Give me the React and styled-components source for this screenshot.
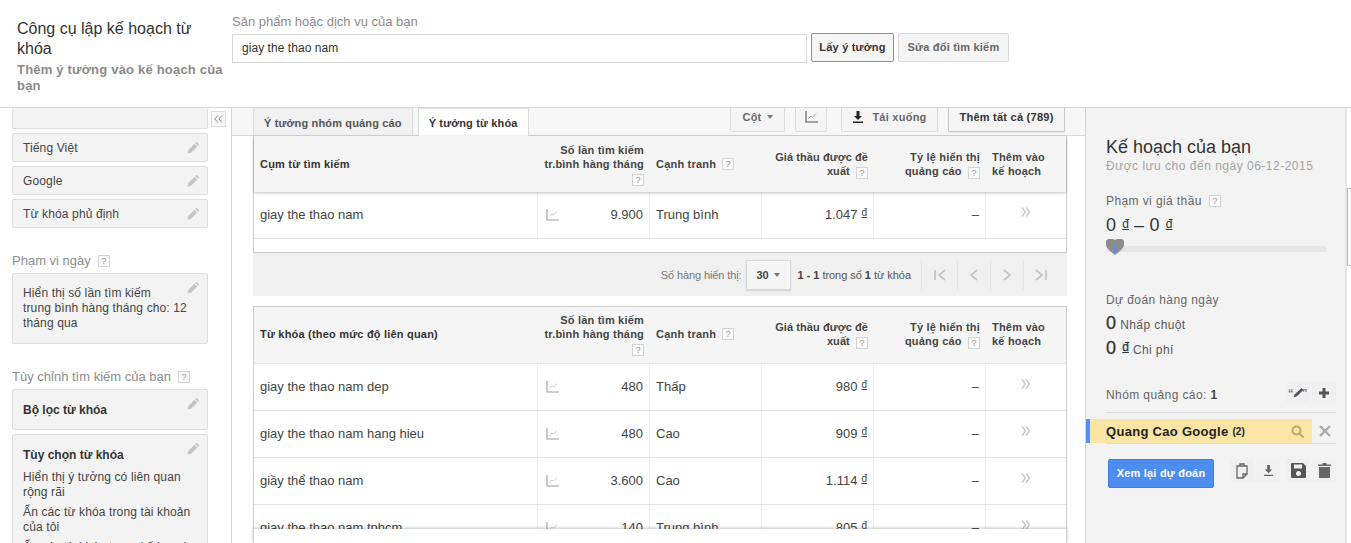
import React from "react";
import styled, { createGlobalStyle } from "styled-components";

const Global = createGlobalStyle`
  html, body { margin: 0; padding: 0; height: 100%; overflow: hidden; background: #fff; }
  body { font-family: "Liberation Sans", Arial, sans-serif; font-size: 13px; color: #333; }
  #root { height: 100%; }
  * { box-sizing: border-box; }
`;

const Page = styled.div`display: flex; flex-direction: column; height: 543px; width: 1351px; overflow: hidden;`;
const Header = styled.header`display: flex; height: 108px; flex: none; border-bottom: 1px solid #d6d6d6;`;
const Heading = styled.div`width: 232px; flex: none; padding: 19px 0 0 17px;`;
const Title = styled.h1`margin: 0 8px 0 0; font-weight: 400; font-size: 16px; line-height: 20px; color: #333;`;
const Subtitle = styled.h2`margin: 3px 0 0; font-weight: 700; font-size: 13px; line-height: 16px; color: #8a8a8a; letter-spacing: .2px;`;
const SearchBox = styled.div`padding-top: 14px;`;
const SearchLabel = styled.div`font-size: 13px; line-height: 16px; color: #8c8c8c;`;
const SearchRow = styled.div`display: flex; align-items: flex-start; margin-top: 4px;`;
const SearchInput = styled.div`width: 575px; height: 29px; border: 1px solid #d9d9d9; font-size: 12px; letter-spacing: .05px; line-height: 27px; padding-left: 9px; color: #333;`;
const HeadButton = styled.div`
  height: 29px; width: ${p => p.$w}px; margin: -1px 0 0 4px; text-align: center;
  border: 1px solid ${p => (p.$primary ? "#5b9ad8" : "#dcdcdc")}; border-radius: 2px; background: #f5f5f5;
  font-size: 11px; line-height: 26px; font-weight: 700; letter-spacing: .2px;
  color: ${p => (p.$primary ? "#333" : "#666")};
`;

const Body = styled.div`display: flex; flex: 1; min-height: 0;`;
const Sidebar = styled.aside`position: relative; width: 232px; flex: none; border-right: 1px solid #d6d6d6; padding: 0 23px 0 12px; overflow: hidden;`;
const Collapse = styled.div`
  position: absolute; left: 211px; top: 3px; width: 15px; height: 16px; border: 1px solid #dcdcdc; background: #f7f7f7;
  display: flex; align-items: center; justify-content: center;
`;
const Panel = styled.div`
  position: relative; background: #f3f3f3; border: 1px solid #dedede; border-radius: 2px;
  margin-top: ${p => p.$gap ?? 4}px; padding: ${p => p.$pad || "0 10px"}; font-size: 12px; line-height: 15px; letter-spacing: .13px; color: #444;
  min-height: ${p => p.$h || 0}px;
  ${p => (p.$cut ? "border-top: 0; height: 21px; margin-top: 0;" : "")}
`;
const PanelLine = styled.div`padding-top: 1px; line-height: 26px;`;
const PanelBold = styled.div`font-weight: 700; color: #333; line-height: 15px; margin-bottom: 7px; letter-spacing: 0;`;
const PanelPara = styled.div`margin-bottom: 5px;`;
const SideLabel = styled.div`margin-top: ${p => p.$top}px; font-size: 13px; line-height: 15px; color: #8c8c8c; display: flex; align-items: center; gap: 7px;`;
const PencilSlot = styled.span`position: absolute; right: 7px; top: ${p => p.$top || 7}px; display: flex;`;

const Main = styled.main`flex: 1; min-width: 0; display: flex; flex-direction: column; overflow: hidden;`;
const ToolRow = styled.div`height: 28px; flex: none; background: #f7f7f7; border-bottom: 1px solid #d6d6d6; display: flex; padding-left: 21px; position: relative;`;
const Tab = styled.div`
  height: ${p => (p.$active ? 28 : 27)}px; margin-right: 5px; padding: 0 10px;
  background: ${p => (p.$active ? "#fff" : "#f1f1f1")}; border: 1px solid #dcdcdc; border-bottom: 0; border-top-color: ${p => (p.$active ? "#ddd" : "#e8e8e8")};
  font-size: 11px; font-weight: 700; line-height: 28px; letter-spacing: .15px; color: ${p => (p.$active ? "#333" : "#555")};
`;
const ToolSpacer = styled.div`flex: 1;`;
const ToolBtn = styled.div`
  height: 24px; margin-left: ${p => p.$ml}px; width: ${p => p.$w}px; background: #f5f5f5; border: 1px solid ${p => (p.$strong ? "#c8c8c8" : "#dcdcdc")}; border-top: 0;
  border-radius: 0 0 2px 2px; display: flex; align-items: center; justify-content: center; gap: 8px;
  font-size: 11px; font-weight: 700; letter-spacing: .25px; color: ${p => (p.$strong ? "#333" : "#666")}; padding-bottom: 6px;
  ${p => (p.$strong ? "box-shadow: 0 1px 1px rgba(0,0,0,.08);" : "")}
`;
const ToolEnd = styled.div`width: 20px; flex: none;`;
const Caret = styled.span`width: 0; height: 0; border: 3.5px solid transparent; border-top: 4px solid #777; border-bottom: 0; margin-left: -3px;`;

const TableWrap = styled.div`margin-left: 21px; width: 814px; border-left: 1px solid #ccc; border-right: 1px solid #ccc; ${p => (p.$framed ? "border-top: 1px solid #ccc;" : "")}`;
const Grid = styled.div`display: grid; grid-template-columns: 284px 112px 112px 112px 112px 1fr;`;
const HeadRow = styled(Grid)`
  height: ${p => p.$h}px; background: #f5f5f5; font-size: 11px; font-weight: 700; line-height: 14px; letter-spacing: .2px; color: #444;
  ${p => (p.$shadow ? "box-shadow: 0 1px 3px rgba(0,0,0,.25); position: relative;" : "border-bottom: 1px solid #e5e5e5; padding-bottom: 2px;")}
`;
const HeadCell = styled.div`
  display: flex; align-items: center; justify-content: ${p => (p.$right ? "flex-end" : "flex-start")};
  padding: 0 6px; text-align: ${p => (p.$right ? "right" : "left")}; white-space: nowrap;
`;
const HeadText = styled.div`color: ${p => (p.$dark ? "#333" : "#444")}; letter-spacing: ${p => (p.$tight ? ".08px" : "inherit")};`;
const Help = styled.span`
  display: inline-block; width: 12px; height: 12px; border: 1px solid #d4d4d4; background: #fafafa; color: #999; font-size: 9px; line-height: 10px; text-align: center;
  font-weight: 400; letter-spacing: 0; vertical-align: -1px; margin-left: ${p => p.$ml ?? 3}px; flex: none;
`;
const Row = styled(Grid)`height: 47px; border-bottom: 1px solid #e5e5e5; font-size: 13px; color: #444; flex: none;`;
const Cell = styled.div`
  display: flex; align-items: center; padding: 0 6px 2px; height: 46px; color: #444;
  justify-content: ${p => (p.$right ? "flex-end" : p.$center ? "center" : "flex-start")};
  ${p => (p.$last ? "" : "border-right: 1px solid #efefef;")}
`;
const VolumeCell = styled(Cell)`padding-left: 8px; justify-content: space-between;`;
const Dong = styled.span`
  font-size: ${p => p.$s || 10}px; line-height: 1; margin-left: ${p => p.$ml ?? 4}px; position: relative; top: ${p => p.$v ?? -1}px;
  color: inherit; letter-spacing: 0; text-decoration: underline;
`;
const AddSlot = styled.span`display: flex; margin: 0 0 4px 0;`;
const BlankBand = styled.div`height: 14px; border-bottom: 1px solid #ccc;`;
const Pager = styled.div`margin-left: 21px; width: 814px; height: 43px; flex: none; background: #f0f0f0; display: flex; align-items: center; justify-content: flex-end; font-size: 11px; color: #777; letter-spacing: -.1px;`;
const PagerSelect = styled.div`
  width: 45px; height: 30px; margin: 0 7px 0 4px; border: 1px solid #d8d8d8; box-shadow: 0 1px 1px rgba(0,0,0,.1); background: #f5f5f5;
  display: flex; align-items: center; justify-content: center; gap: 8px; font-weight: 700; color: #444; font-size: 11px;
`;
const PagerCount = styled.div`color: #555; letter-spacing: -.04px; margin-right: 10px; b { color: #444; }`;
const PagerNav = styled.div`display: flex; padding-right: 10px;`;
const NavBtn = styled.div`width: ${p => p.$w}px; height: 30px; border-left: 1px solid #e4e4e4; display: flex; align-items: center; justify-content: center;`;
const SecondTable = styled.div`margin-top: 10px; flex: none; height: 223px; overflow: hidden;`;
const FootBand = styled.div`margin-left: 21px; width: 814px; flex: 1; border-left: 1px solid #ccc; border-right: 1px solid #ccc; background: #fff; box-shadow: 0 -1px 3px rgba(0,0,0,.22); position: relative;`;

const Plan = styled.aside`position: relative; width: 266px; flex: none; display: flex; border-left: 1px solid #d6d6d6;`;
const PlanInner = styled.div`width: 261px; background: #f3f3f3; border-right: 2px solid #e4e4e4; padding: 29px 0 0 20px; overflow: hidden;`;
const PlanHandle = styled.div`position: absolute; right: 0; top: 80px; width: 4px; height: 78px; border: 1px solid #bbb; border-right: 0; background: #fff;`;
const PlanTitle = styled.div`font-size: 18px; line-height: 20px; color: #333;`;
const PlanSaved = styled.div`font-size: 12px; line-height: 16px; color: #a3a3a3; letter-spacing: .5px; margin-top: 1px;`;
const PlanLabel = styled.div`margin-top: ${p => p.$top}px; font-size: 12px; line-height: 16px; color: #666; display: flex; align-items: center; letter-spacing: .4px;`;
const BigFigure = styled.div`margin-top: ${p => p.$top}px; font-size: 18px; line-height: 20px; color: #333; letter-spacing: .2px; -webkit-text-stroke: ${p => (p.$heavy ? ".3px" : "0")};`;
const FigureNote = styled.span`font-size: 12px; color: #555; margin-left: 4px; letter-spacing: .4px; -webkit-text-stroke: 0;`;
const SliderTrack = styled.div`position: relative; width: 221px; height: 6px; margin-top: 11px; border-radius: 3px; background: #e6e6e6;`;
const SliderThumb = styled.span`position: absolute; left: 0; top: -8px; display: flex;`;
const GroupHead = styled.div`display: flex; align-items: center; width: 230px; height: 28px; margin-top: 25px; border-bottom: 1px solid #dcdcdc; padding-bottom: 7px; font-size: 12px; color: #666; letter-spacing: .4px; b { color: #444; }`;
const GroupIcons = styled.div`margin: -5px 0 0 auto; display: flex; gap: 2px;`;
const GroupIconBtn = styled.div`width: 24px; height: 21px; background: #f0f0f0; display: flex; align-items: center; justify-content: center;`;
const GroupRow = styled.div`display: flex; align-items: center; margin: 5px 0 0 -20px; width: 250px; height: 25px; position: relative;`;
const GroupName = styled.div`
  width: 226px; height: 24px; background: #fbe5a4; border-left: 4px solid #4d90fe; padding: 1px 8px 0 16px; display: flex; align-items: center;
  font-size: 13px; font-weight: 700; letter-spacing: .3px; color: #222; small { font-size: 10px; margin-left: 4px; letter-spacing: 0; }
`;
const GroupSearch = styled.span`margin-left: auto; display: flex;`;
const GroupClose = styled.span`margin-left: 7px; display: flex;`;
const GroupLine = styled.div`width: 230px; height: 1px; background: #dcdcdc;`;
const ActionRow = styled.div`display: flex; align-items: center; margin: 15px 0 0 2px; width: 228px;`;
const ReviewBtn = styled.div`width: 106px; height: 29px; background: #4d8df0; border: 1px solid #3d7fe0; border-radius: 2px; color: #fff; font-size: 11px; font-weight: 700; letter-spacing: .2px; line-height: 27px; text-align: center;`;
const ActionIcons = styled.div`margin-left: auto; display: flex; margin-top: -6px;`;
const ActionIcon = styled.div`width: 24px; height: 23px; margin-left: ${p => p.$ml ?? 2}px; background: #f0f0f0; display: flex; align-items: center; justify-content: center;`;

const Pencil = () => (
  <svg width="13" height="13" viewBox="0 0 13 13"><path fill="#c4c4c4" d="M9.5.7l2.8 2.8-1.3 1.3-2.8-2.8zM7.5 2.7l2.8 2.8L4 11.8.5 12.6l.8-3.5z" /></svg>
);
const ChartIcon = ({ c = "#bdbdbd" }) => (
  <svg width="13" height="13" viewBox="0 0 13 13" fill="none">
    <path d="M1 1v11h12" stroke={c} strokeWidth="1.6" />
    <path d="M3.5 8.5l2.5-2.5 1.5 1.2L11 3.5" stroke={c} strokeWidth=".8" />
  </svg>
);
const Chevrons = () => (
  <svg width="10" height="10" viewBox="0 0 10 10" fill="none" stroke="#c4c4c4" strokeWidth="1.3"><path d="M1 .5l3.500 4.500L1 9.500M5 .5l3.500 4.500L5 9.500" /></svg>
);
const Download = ({ c = "#222", w = 12 }) => (
  <svg width={w} height={w} viewBox="0 0 12 12"><path fill={c} d="M4.5 0h3v5H10L6 9 2 5h2.5zM1 10.5h10V12H1z" /></svg>
);
const nav = {
  first: "M2 2v10M12 2L6 7l6 5",
  prev: "M10 2L4 7l6 5",
  next: "M4 2l6 5-6 5",
  last: "M12 2v10M2 2l6 5-6 5",
};
const NavIcon = ({ d }) => (
  <svg width="16" height="14" viewBox="0 0 14 14" fill="none" stroke="#c4c4c4" strokeWidth="1.7"><path d={d} /></svg>
);

const HeaderCells = ({ first }) => (
  <>
    <HeadCell><HeadText $dark>{first}</HeadText></HeadCell>
    <HeadCell $right><HeadText>Số lần tìm kiếm<br />tr.bình hàng tháng<br /><Help $ml={0}>?</Help></HeadText></HeadCell>
    <HeadCell><HeadText>Cạnh tranh</HeadText><Help $ml={6}>?</Help></HeadCell>
    <HeadCell $right><HeadText $tight>Giá thầu được đề<br />xuất <Help>?</Help></HeadText></HeadCell>
    <HeadCell $right><HeadText>Tỷ lệ hiển thị<br />quảng cáo <Help>?</Help></HeadText></HeadCell>
    <HeadCell><HeadText>Thêm vào<br />kế hoạch</HeadText></HeadCell>
  </>
);

const KeywordRow = ({ k, vol, comp, bid }) => (
  <Row>
    <Cell>{k}</Cell>
    <VolumeCell><ChartIcon />{vol}</VolumeCell>
    <Cell>{comp}</Cell>
    <Cell $right>{bid}<Dong>đ</Dong></Cell>
    <Cell $right>–</Cell>
    <Cell $center $last><AddSlot><Chevrons /></AddSlot></Cell>
  </Row>
);

const rows = [
  ["giay the thao nam dep", "480", "Thấp", "980"],
  ["giay the thao nam hang hieu", "480", "Cao", "909"],
  ["giầy thể thao nam", "3.600", "Cao", "1.114"],
  ["giay the thao nam tphcm", "140", "Trung bình", "805"],
];

export default function App() {
  return (
    <Page>
      <Global />
      <Header>
        <Heading>
          <Title>Công cụ lập kế hoạch từ khóa</Title>
          <Subtitle>Thêm ý tưởng vào kế hoạch của bạn</Subtitle>
        </Heading>
        <SearchBox>
          <SearchLabel>Sản phẩm hoặc dịch vụ của bạn</SearchLabel>
          <SearchRow>
            <SearchInput>giay the thao nam</SearchInput>
            <HeadButton $primary $w={83}>Lấy ý tưởng</HeadButton>
            <HeadButton $w={111}>Sửa đổi tìm kiếm</HeadButton>
          </SearchRow>
        </SearchBox>
      </Header>
      <Body>
        <Sidebar>
          <Collapse>
            <svg width="9" height="8" viewBox="0 0 9 8" fill="none" stroke="#888" strokeWidth="1"><path d="M4 .5L.8 4 4 7.5M8 .5L4.8 4 8 7.5" /></svg>
          </Collapse>
          <Panel $cut />
          <Panel $h={29}><PanelLine>Tiếng Việt</PanelLine><PencilSlot><Pencil /></PencilSlot></Panel>
          <Panel $h={29}><PanelLine>Google</PanelLine><PencilSlot><Pencil /></PencilSlot></Panel>
          <Panel $h={29}><PanelLine>Từ khóa phủ định</PanelLine><PencilSlot><Pencil /></PencilSlot></Panel>
          <SideLabel $top={25}>Phạm vi ngày <Help $ml={0}>?</Help></SideLabel>
          <Panel $gap={5} $h={71} $pad="12px 10px 0">
            Hiển thị số lần tìm kiếm<br />trung bình hàng tháng cho: 12<br />tháng qua
            <PencilSlot><Pencil /></PencilSlot>
          </Panel>
          <SideLabel $top={25}>Tùy chỉnh tìm kiếm của bạn <Help $ml={0}>?</Help></SideLabel>
          <Panel $gap={5} $h={41} $pad="13px 10px 0"><PanelBold>Bộ lọc từ khóa</PanelBold><PencilSlot><Pencil /></PencilSlot></Panel>
          <Panel $gap={4} $h={140} $pad="13px 10px 0">
            <PanelBold>Tùy chọn từ khóa</PanelBold>
            <PanelPara>Hiển thị ý tưởng có liên quan rộng rãi</PanelPara>
            <PanelPara>Ẩn các từ khóa trong tài khoản của tôi</PanelPara>
            <PanelPara>Ẩn các từ khóa trong kế hoạch của tôi</PanelPara>
            <PencilSlot><Pencil /></PencilSlot>
          </Panel>
        </Sidebar>
        <Main>
          <ToolRow>
            <Tab>Ý tưởng nhóm quảng cáo</Tab>
            <Tab $active>Ý tưởng từ khóa</Tab>
            <ToolSpacer />
            <ToolBtn $w={55} $ml={0}>Cột <Caret /></ToolBtn>
            <ToolBtn $w={32} $ml={10}><ChartIcon c="#888" /></ToolBtn>
            <ToolBtn $w={97} $ml={14}><Download />Tải xuống</ToolBtn>
            <ToolBtn $w={117} $ml={10} $strong>Thêm tất cả (789)</ToolBtn>
            <ToolEnd />
          </ToolRow>
          <TableWrap>
            <HeadRow $h={56} $shadow><HeaderCells first="Cụm từ tìm kiếm" /></HeadRow>
            <KeywordRow k="giay the thao nam" vol="9.900" comp="Trung bình" bid="1.047" />
            <BlankBand />
          </TableWrap>
          <Pager>
            Số hàng hiển thị:
            <PagerSelect>30 <Caret /></PagerSelect>
            <PagerCount><b>1 - 1</b> trong số <b>1</b> từ khóa</PagerCount>
            <PagerNav>
              <NavBtn $w={36}><NavIcon d={nav.first} /></NavBtn>
              <NavBtn $w={33}><NavIcon d={nav.prev} /></NavBtn>
              <NavBtn $w={33}><NavIcon d={nav.next} /></NavBtn>
              <NavBtn $w={34}><NavIcon d={nav.last} /></NavBtn>
            </PagerNav>
          </Pager>
          <SecondTable>
            <TableWrap $framed>
              <HeadRow $h={57}><HeaderCells first="Từ khóa (theo mức độ liên quan)" /></HeadRow>
              {rows.map(r => <KeywordRow key={r[0]} k={r[0]} vol={r[1]} comp={r[2]} bid={r[3]} />)}
            </TableWrap>
          </SecondTable>
          <FootBand />
        </Main>
        <Plan>
          <PlanInner>
            <PlanTitle>Kế hoạch của bạn</PlanTitle>
            <PlanSaved>Được lưu cho đến ngày 06-12-2015</PlanSaved>
            <PlanLabel $top={19}>Phạm vi giá thầu<Help $ml={7}>?</Help></PlanLabel>
            <BigFigure $top={6}>0<Dong $s={12} $ml={6} $v={-3}>đ</Dong> – 0<Dong $s={12} $ml={6} $v={-3}>đ</Dong></BigFigure>
            <SliderTrack>
              <SliderThumb>
                <svg width="18" height="17" viewBox="0 0 18 17"><path fill="#8c8c8c" d="M3 1h4l2 1 2-1h4c2 0 3 1 3 3v3c0 2-2 4-4 6l-5 4-5-4C2 11 0 9 0 7V4c0-2 1-3 3-3z" /><rect x="8" y="8" width="2" height="8" fill="#4d90fe" /></svg>
              </SliderThumb>
            </SliderTrack>
            <PlanLabel $top={40}>Dự đoán hàng ngày</PlanLabel>
            <BigFigure $top={5} $heavy>0<FigureNote>Nhấp chuột</FigureNote></BigFigure>
            <BigFigure $top={3} $heavy>0<Dong $s={12} $ml={6} $v={-3}>đ</Dong><FigureNote>Chi phí</FigureNote></BigFigure>
            <GroupHead>
              <span>Nhóm quảng cáo: <b>1</b></span>
              <GroupIcons>
                <GroupIconBtn>
                  <svg width="20" height="10" viewBox="0 0 20 10"><text x="0" y="9" fontFamily="Liberation Sans" fontSize="11" fontWeight="700" fill="#777">“</text><path fill="#555" d="M13.500 0l2 2-7 6.500-3 1 1-3z" /><text x="14" y="9" fontFamily="Liberation Sans" fontSize="11" fontWeight="700" fill="#777">”</text></svg>
                </GroupIconBtn>
                <GroupIconBtn>
                  <svg width="10" height="10" viewBox="0 0 10 10"><path fill="#555" d="M3.5 0h3v3.5H10v3H6.500V10h-3V6.500H0v-3h3.500z" /></svg>
                </GroupIconBtn>
              </GroupIcons>
            </GroupHead>
            <GroupRow>
              <GroupName>
                Quang Cao Google<small>(2)</small>
                <GroupSearch>
                  <svg width="13" height="13" viewBox="0 0 13 13" fill="none" stroke="#bba868" strokeWidth="2"><circle cx="5.500" cy="5.500" r="4" /><path d="M8.500 8.500L12.500 12.500" /></svg>
                </GroupSearch>
              </GroupName>
              <GroupClose>
                <svg width="12" height="12" viewBox="0 0 12 12" stroke="#aaa" strokeWidth="2.400"><path d="M1 1l10 10M11 1L1 11" /></svg>
              </GroupClose>
            </GroupRow>
            <GroupLine />
            <ActionRow>
              <ReviewBtn>Xem lại dự đoán</ReviewBtn>
              <ActionIcons>
                <ActionIcon>
                  <svg width="12" height="16" viewBox="0 0 12 16" fill="none" stroke="#666" strokeWidth="1.300"><path d="M1 3h10v8l-4 4H1zM4 3V1h4v2M11 11H7v4" /></svg>
                </ActionIcon>
                <ActionIcon><Download c="#666" w={11} /></ActionIcon>
                <ActionIcon $ml={6}>
                  <svg width="15" height="15" viewBox="0 0 15 15"><path fill="#555" fillRule="evenodd" d="M1 0h11l3 3v11a1 1 0 01-1 1H1a1 1 0 01-1-1V1a1 1 0 011-1zM3 1.500v4h8v-4zM7.500 8a2.500 2.500 0 100 5 2.500 2.500 0 000-5z" /></svg>
                </ActionIcon>
                <ActionIcon>
                  <svg width="13" height="15" viewBox="0 0 13 15"><path fill="#666" d="M4.500 0h4v1.500H13V3H0V1.500h4.500zM1 4h11v11H1z" /></svg>
                </ActionIcon>
              </ActionIcons>
            </ActionRow>
          </PlanInner>
          <PlanHandle />
        </Plan>
      </Body>
    </Page>
  );
}
